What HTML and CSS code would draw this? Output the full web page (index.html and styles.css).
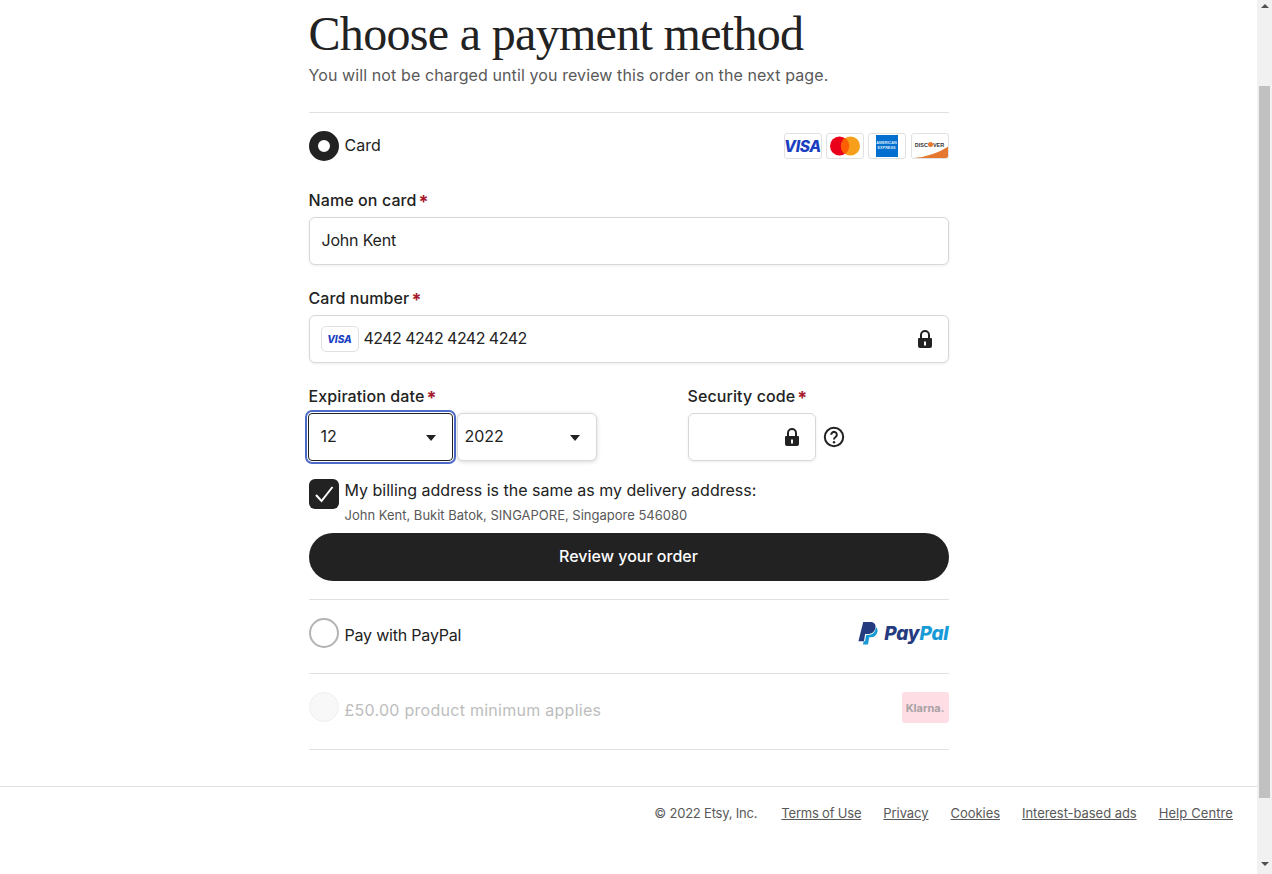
FILE: index.html
```html
<!DOCTYPE html>
<html lang="en">
<head>
<meta charset="utf-8">
<title>Choose a payment method</title>
<link rel="stylesheet" href="styles.css">
</head>
<body>
<div class="page">
  <main class="checkout">
    <h1 class="title">Choose a payment method</h1>
    <p class="subtitle">You will not be charged until you review this order on the next page.</p>

    <section class="method method-card">
      <div class="method-head">
        <span class="radio radio-on"></span>
        <span class="method-name">Card</span>
        <div class="cards">
          <span class="card card-visa"><span class="visa-word">VISA</span></span>
          <span class="card card-mc"><svg width="32" height="20" viewBox="0 0 32 20"><circle cx="10.500" cy="10" r="9.500" fill="#eb001b"/><circle cx="21.500" cy="10" r="9.500" fill="#f79e1b"/><path d="M16 2.100a9.500 9.500 0 0 1 0 15.800a9.500 9.500 0 0 1 0-15.800z" fill="#ff5f00"/></svg></span>
          <span class="card card-amex"><span class="amex-box">AMERICAN EXPRESS</span></span>
          <span class="card card-disc"><span class="disc-word">DISC<i class="disc-dot"></i>VER</span><svg class="disc-swoosh" width="37" height="13" viewBox="0 0 37 13"><path d="M2 13 Q22 11 37 1 V13 Z" fill="#e6772e"/></svg></span>
        </div>
      </div>

      <label class="label" for="name">Name on card<span class="req">*</span></label>
      <input class="input input-name" id="name" value="John Kent">

      <label class="label label-next" for="num">Card number<span class="req">*</span></label>
      <div class="input input-wrap">
        <span class="mini-visa">VISA</span>
        <input class="bare bare-num" id="num" value="4242 4242 4242 4242">
        <svg class="lock" width="24" height="24" viewBox="0 0 24 24"><path fill-rule="evenodd" d="M18 11h-1V8a5 5 0 0 0-10 0v3H6a1 1 0 0 0-1 1v7a2 2 0 0 0 2 2h10a2 2 0 0 0 2-2v-7a1 1 0 0 0-1-1zM9 8a3 3 0 0 1 6 0v3H9zm4 10.500h-2v-4h2z" fill="#222"/></svg>
      </div>

      <div class="expiry-row">
        <div class="expiry">
          <span class="label">Expiration date<span class="req">*</span></span>
          <div class="selects">
            <div class="select select-month">
              <span class="select-value">12</span>
              <svg width="24" height="24" viewBox="0 0 24 24"><path d="M7 10h10l-5 6z" fill="#222"/></svg>
            </div>
            <div class="select select-year">
              <span class="select-value">2022</span>
              <svg width="24" height="24" viewBox="0 0 24 24"><path d="M7 10h10l-5 6z" fill="#222"/></svg>
            </div>
          </div>
        </div>
        <div class="security">
          <label class="label" for="cvc">Security code<span class="req">*</span></label>
          <div class="security-line">
            <div class="input input-wrap input-cvc">
              <input class="bare" id="cvc">
              <svg class="lock" width="24" height="24" viewBox="0 0 24 24"><path fill-rule="evenodd" d="M18 11h-1V8a5 5 0 0 0-10 0v3H6a1 1 0 0 0-1 1v7a2 2 0 0 0 2 2h10a2 2 0 0 0 2-2v-7a1 1 0 0 0-1-1zM9 8a3 3 0 0 1 6 0v3H9zm4 10.500h-2v-4h2z" fill="#222"/></svg>
            </div>
            <svg class="help" width="24" height="24" viewBox="0 0 24 24"><circle cx="12" cy="12" r="9.200" fill="none" stroke="#222" stroke-width="2"/><path d="M9.200 9.800A2.800 2.800 0 1 1 13.600 12c-1 .7-1.600 1.200-1.600 2.400" fill="none" stroke="#222" stroke-width="2"/><circle cx="12" cy="17.200" r="1.200" fill="#222"/></svg>
          </div>
        </div>
      </div>

      <div class="billing">
        <span class="checkbox"><svg width="24" height="24" viewBox="0 0 24 24"><path d="M4 13l5.500 6L20.500 5" fill="none" stroke="#fff" stroke-width="2"/></svg></span>
        <div class="billing-text">
          <div class="billing-main">My billing address is the same as my delivery address:</div>
          <div class="billing-addr">John Kent, Bukit Batok, SINGAPORE, Singapore 546080</div>
        </div>
      </div>

      <button class="review" type="button">Review your order</button>
    </section>

    <section class="method method-paypal">
      <span class="radio"></span>
      <span class="method-name">Pay with PayPal</span>
      <span class="paypal">
        <svg width="20" height="23" viewBox="0 0 20 24"><path d="M5 0h7c4 0 6.500 2 5.800 6-.8 4.500-4 6.500-8 6.500H7L5.800 20H0z" fill="#253b80"/><path d="M18.300 5.500c1.600 1 2 2.800 1.500 5-.9 3.800-3.500 5.500-7 5.500h-1.500L10 23.500H4.800l.6-3.500H6.900L8 13.500h2c4.500 0 7.500-2.500 8.300-8z" fill="#179bd7"/></svg>
        <span class="pp-word"><b class="pp-pay">Pay</b><b class="pp-pal">Pal</b></span>
      </span>
    </section>

    <section class="method method-klarna">
      <span class="radio radio-off"></span>
      <span class="method-name">£50.00 product minimum applies</span>
      <span class="klarna">Klarna.</span>
    </section>
  </main>

  <footer class="footer">
    <span class="copy">© 2022 Etsy, Inc.</span>
    <a class="link-terms" href="#">Terms of Use</a>
    <a href="#">Privacy</a>
    <a href="#">Cookies</a>
    <a href="#">Interest-based ads</a>
    <a class="link-help" href="#">Help Centre</a>
  </footer>
</div>
<aside class="scrollbar">
  <span class="sb-up"></span>
  <span class="sb-thumb"></span>
  <span class="sb-down"></span>
</aside>
</body>
</html>
```
FILE: styles.css
```css
* { box-sizing: border-box; }
html, body { margin: 0; height: 100%; overflow: hidden; }
body {
  display: flex;
  background: #fff;
  color: #222;
  font-family: Inter, "Liberation Sans", sans-serif;
  font-size: 16px;
}
.page { flex: 1; min-width: 0; height: 874px; }
.checkout { width: 640px; margin: 0 auto; }

.title {
  margin: 0;
  padding-top: 8px;
  font-family: "Liberation Serif", serif;
  font-weight: 400;
  font-size: 48px;
  line-height: 52px;
  color: #222;
  letter-spacing: -0.680px;
}
.subtitle {
  margin: 5px 0 0;
  line-height: 20px;
  color: #595959;
  padding-bottom: 27px;
  letter-spacing: .1px;
}

.method { border-top: 1px solid #e1e1e1; }
.method-card { padding: 18px 0; }
.method-head { display: flex; align-items: center; }
.radio {
  width: 30px; height: 30px; flex: none;
  border-radius: 50%;
  border: 2px solid #b3b3b3;
  background: #fff;
}
.radio-on { border: 9.500px solid #222; }
.radio-off { border: 1px solid #eee; background: #f8f8f8; }
.method-name { margin-left: 6px; line-height: 24px; }
.method-head .method-name { margin-top: -2px; }

.cards { margin-left: auto; display: flex; gap: 4px; }
.card {
  width: 38px; height: 26px;
  border: 1px solid #e1e1e1;
  border-radius: 3px;
  background: #fff;
  display: flex; align-items: center; justify-content: center;
  overflow: hidden;
  position: relative;
}
.card-visa, .card-mc, .card-amex { left: -1px; }
.visa-word {
  font: italic 800 15.500px Inter, sans-serif;
  color: #1a3fc0;
  letter-spacing: -0.300px;
}
.amex-box {
  width: 22px; height: 22px;
  background: #016fd0;
  color: #dbe9f8;
  font: 700 3.800px/5px "Liberation Sans", sans-serif;
  text-align: center;
  display: flex; align-items: center; justify-content: center;
}
.disc-word {
  font: 700 5.500px "Liberation Sans", sans-serif;
  color: #333;
  margin-bottom: 3px;
  position: relative;
  z-index: 1;
}
.disc-dot {
  display: inline-block; width: 5px; height: 5px;
  border-radius: 50%; background: #e6772e;
}
.disc-swoosh { position: absolute; left: 0; bottom: 0; }

.label {
  display: block;
  font-weight: 500;
  line-height: 24px;
  letter-spacing: .1px;
  margin-top: 27px;
  margin-bottom: 5px;
}
.label-next { margin-top: 21px; }
.req {
  color: #a61a2e;
  margin-left: 2px;
  font-size: 18px;
  font-weight: 700;
  line-height: 0;
  vertical-align: -2px;
}

.input {
  width: 100%;
  height: 48px;
  border: 1px solid #d8d8d8;
  border-radius: 6px;
  background: #fff;
  padding: 0 12px 2px;
  font: inherit;
  color: #222;
  box-shadow: 0 1px 3px rgba(0, 0, 0, .08);
}
.input-name { letter-spacing: -.2px; }
.input-wrap { display: flex; align-items: center; padding-bottom: 0; }
.bare {
  flex: 1; min-width: 0;
  border: 0; padding: 0 0 2px; outline: 0;
  font: inherit; color: inherit;
  background: transparent;
}
.bare-num { letter-spacing: -.53px; }
.mini-visa {
  width: 38px; height: 26px; flex: none;
  margin-left: -1px; margin-right: 5px;
  border: 1px solid #e1e1e1;
  border-radius: 5px;
  font: italic 800 10px/24px Inter, sans-serif;
  color: #1a3fc0;
  text-align: center;
}
.lock { flex: none; margin-right: -1px; }

.expiry-row { display: flex; margin-top: 21px; }
.expiry-row .label { margin-top: 0; }
.expiry { width: 379px; }
.selects { display: flex; gap: 4px; margin-left: -1px; }
.select {
  height: 48px;
  border: 1px solid #d8d8d8;
  border-radius: 6px;
  display: flex; align-items: center; justify-content: space-between;
  padding: 0 9px 0 12px;
  box-shadow: 0 1px 4px rgba(0, 0, 0, .16);
  background: #fff;
}
.select-value { padding-bottom: 2px; }
.select-month {
  width: 145px;
  border-color: #222;
  border-radius: 4px;
  box-shadow: 0 0 0 1px #fff, 0 0 0 3px #4d6bc6;
}
.select-year { width: 140px; padding-left: 7px; }
.security-line { display: flex; align-items: center; gap: 6px; }
.input-cvc { width: 128px; }

.billing { display: flex; margin-top: 18px; }
.checkbox {
  width: 30px; height: 30px; flex: none;
  background: #222;
  border-radius: 6px;
  display: flex; align-items: center; justify-content: center;
}
.billing-text { margin: -1px 0 0 6px; }
.billing-main { line-height: 24px; color: #222; }
.billing-addr { font-size: 13px; line-height: 20px; color: #595959; margin-top: 3px; }

.review {
  display: block;
  width: 100%;
  height: 48px;
  margin-top: 8px;
  padding: 0 0 2px;
  border: 0;
  border-radius: 24px;
  background: #222;
  color: #fff;
  font: 500 16px Inter, "Liberation Sans", sans-serif;
}

.method-paypal, .method-klarna { display: flex; align-items: flex-start; padding-top: 18px; }
.method-paypal { height: 74px; }
.method-paypal .method-name { margin-top: 5px; letter-spacing: -.2px; }
.method-klarna { height: 77px; border-bottom: 1px solid #e1e1e1; }
.method-klarna .method-name { margin-top: 6px; color: #bdbdbd; letter-spacing: .27px; }
.paypal { margin-left: auto; margin-top: 4px; display: flex; align-items: center; gap: 6px; }
.pp-word { font: italic 800 19px Inter, sans-serif; letter-spacing: -.2px; }
.pp-pay { color: #253b80; font-weight: 800; }
.pp-pal { color: #179bd7; font-weight: 800; }
.klarna {
  margin-left: auto;
  width: 47px; height: 31px;
  border-radius: 3px;
  background: #ffdde5;
  color: #a9a2a4;
  font: 700 11px/33px Inter, sans-serif;
  text-align: center;
}

.footer {
  margin-top: 36px;
  border-top: 1px solid #e1e1e1;
  height: 88px;
  padding: 17px 24px 0 0;
  display: flex;
  justify-content: flex-end;
  gap: 22px;
  font-size: 13px;
  line-height: 18px;
  letter-spacing: -.05px;
  color: #595959;
}
.footer a { color: #595959; }
.footer .link-terms { letter-spacing: -.2px; }
.footer .link-help { letter-spacing: .1px; }
.copy { margin-right: 2px; letter-spacing: -.2px; }

.scrollbar {
  width: 15px; flex: none; height: 874px;
  background: #f1f1f1;
  display: flex; flex-direction: column; align-items: center;
}
.sb-up, .sb-down { width: 0; height: 0; border-left: 4px solid transparent; border-right: 4px solid transparent; }
.sb-up { margin-top: 4px; border-bottom: 4px solid #505050; }
.sb-thumb { width: 11px; height: 712px; background: #c1c1c1; margin-top: 78px; }
.sb-down { margin-top: 64px; border-top: 4px solid #505050; }
```
